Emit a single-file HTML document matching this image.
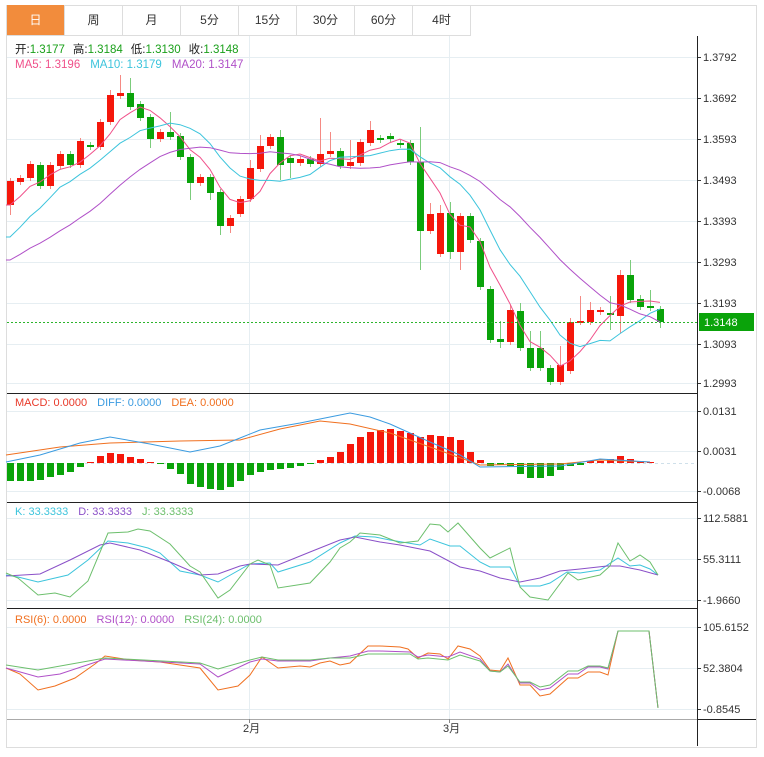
<!DOCTYPE html>
<html><head><meta charset="utf-8"><style>
body{margin:0;background:#fff;width:764px;height:757px;overflow:hidden;font-family:"Liberation Sans","Noto Sans CJK SC",sans-serif}
#box{position:absolute;left:6px;top:5px;width:749px;height:741px;border:1px solid #ddd}
.tab{position:absolute;top:5px;height:30px;width:57px;border-right:1px solid #ddd;border-bottom:1px solid #ddd;font-size:12px;line-height:30px;text-align:center;color:#333}
svg{position:absolute;left:0;top:0}
</style></head><body>
<div id="box"></div>
<div id="tabs"></div>
<svg id="s" width="764" height="757" font-family="Liberation Sans, Noto Sans CJK SC, sans-serif"></svg>
<script>
var T=["日","周","月","5分","15分","30分","60分","4时"],h="";
T.forEach(function(t,i){h+='<div class="tab" style="left:'+(7+i*58)+'px;'+(i==0?'background:#f28c3c;color:#fff;':'')+'">'+t+'</div>'});
document.getElementById('tabs').innerHTML=h;
var o="";
function L(x1,y1,x2,y2,c,w,d){o+='<line x1="'+x1+'" y1="'+y1+'" x2="'+x2+'" y2="'+y2+'" stroke="'+c+'" stroke-width="'+(w||1)+'"'+(d?' stroke-dasharray="'+d+'"':'')+'/>'}
function P(pts,c){o+='<polyline fill="none" stroke="'+c+'" stroke-width="1" points="'+pts.map(function(p){return p.join(',')}).join(' ')+'"/>'}
function TX(x,y,t,c,s){o+='<text x="'+x+'" y="'+y+'" fill="'+c+'" font-size="'+(s||11)+'">'+t+'</text>'}
var mg=[[57,"1.3792"],[98,"1.3692"],[139,"1.3593"],[180,"1.3493"],[221,"1.3393"],[262,"1.3293"],[303,"1.3193"],[344,"1.3093"],[383,"1.2993"]];
var g2=[[411,"0.0131"],[451,"0.0031"],[491,"-0.0068"]];
var g3=[[518,"112.5881"],[559,"55.3111"],[600,"-1.9660"]];
var g4=[[627,"105.6152"],[668,"52.3804"],[709,"-0.8545"]];
[mg,g2,g3,g4].forEach(function(g){g.forEach(function(a){L(7,a[0]+.5,697,a[0]+.5,"#e6eef2");L(697,a[0]+.5,701,a[0]+.5,"#333");TX(703,a[0]+4,a[1],"#333",11)})});
L(249.5,36,249.5,720,"#e6eef2");L(449.5,36,449.5,720,"#e6eef2");
L(7,463.5,697,463.5,"#cfe0ea",1,"3,3");
var C=[[1,181,205],[1,178,182],[1,164,178],[0,165,186],[1,165,186],[1,154,166],[0,154,165],[1,141,165],[0,145,147],[1,122,147],[1,95,122],[1,93,96],[0,93,107],[0,104,118],[0,117,139],[1,132,139],[0,132,137],[0,136,157],[0,157,183],[1,177,183],[0,177,193],[0,192,226],[1,218,226],[1,199,214],[1,168,199],[1,146,169],[1,137,146],[0,137,165],[0,158,163],[1,159,163],[0,159,164],[1,154,164],[1,151,154],[0,151,166],[1,162,166],[1,142,163],[1,130,143],[0,138,140],[0,136,139],[0,143,145],[0,143,162],[0,162,231],[1,214,231],[1,213,254],[0,213,252],[1,216,252],[0,216,240],[0,241,287],[0,289,340],[0,339,342],[1,310,342],[0,311,348],[0,348,368],[0,348,368],[0,368,382],[1,365,382],[1,322,371],[1,321,322],[1,310,322],[1,310,312],[0,313,315],[1,275,316],[0,275,300],[0,299,307],[0,306,308],[0,309,322]];
var W={1:[0,215],11:[90,0],12:[75,0],13:[78,0],15:[0,148],17:[112,0],19:[0,200],21:[0,200],22:[0,235],23:[0,233],25:[160,0],26:[135,0],28:[130,180],29:[0,178],32:[118,0],33:[132,0],35:[140,0],37:[121,0],42:[127,270],43:[203,0],44:[205,0],45:[202,259],46:[0,270],48:[238,0],49:[286,0],50:[321,348],51:[305,0],52:[303,0],53:[331,371],54:[331,0],56:[346,0],57:[318,0],58:[296,0],59:[302,0],61:[296,330],62:[270,333],63:[260,0],64:[295,0],65:[290,0],66:[0,328]};
var closes=[290,288,286,284,283,282,281,280,278,278,275,272,270,268,260,220,215,208,201];
C.forEach(function(c,i){var x=10+i*10,w=W[i+1]||[0,0],hi=w[0]||c[1]-3,lo=w[1]||c[2]+3,col=c[0]?"#f5170b":"#0aa30a";
L(x+.5,hi,x+.5,lo,c[0]?"#f58a84":"#7ccc7c");
o+='<rect x="'+(x-3)+'" y="'+c[1]+'" width="7" height="'+Math.max(2,c[2]-c[1])+'" fill="'+col+'"/>';
closes.push(c[0]?c[1]:c[2]);});
[[5,"#f0508a"],[10,"#3cc4dc"],[20,"#b050c8"]].forEach(function(m){var pts=[];for(var i=0;i<66;i++){var k=i+19,s=0;for(var j=0;j<m[0];j++)s+=closes[k-j];pts.push([10+i*10,(s/m[0]).toFixed(1)])}pts.unshift([6,pts[0][1]]);P(pts,m[1])});
L(7,322.5,697,322.5,"#2cb52c",1,"2,2");
o+='<rect x="699" y="313" width="55" height="18" fill="#0aa30a"/>';TX(704,326,"1.3148","#fff",11);
var mb=[481,481,481,480,477,475,472,467,462,456,453,454,457,459,462,463,469,474,484,487,489,490,487,481,475,472,470,469,468,466,464,460,457,452,444,437,432,430,429,431,433,437,435,436,437,440,452,460,466,465,466,474,478,478,476,470,466,465,461,461,459,456,459,461,462];
mb.forEach(function(v,i){var x=10+i*10,t=Math.min(v,463),b=Math.max(v,463);if(b-t<1)b=t+1;o+='<rect x="'+(x-3)+'" y="'+t+'" width="7" height="'+(b-t)+'" fill="'+(v<463?"#f5170b":"#0aa30a")+'"/>'});
P([[6,455],[60,447],[110,443],[180,441],[240,440],[280,429],[320,421],[350,424],[390,433],[430,447],[480,465],[560,464],[600,460],[650,462]],"#f07020");
P([[6,462],[40,455],[80,443],[110,437],[150,444],[190,452],[220,446],[240,438],[260,430],[300,423],[330,417],[350,413],[370,417],[390,424],[430,442],[460,455],[480,467],[560,466],[600,459],[650,462]],"#3b9be0");
P([[6,575],[18,577],[38,582],[68,575],[88,560],[108,541],[128,543],[148,548],[160,553],[180,571],[200,575],[218,582],[250,564],[270,563],[278,572],[310,562],[340,543],[355,536],[375,537],[390,540],[420,545],[430,539],[450,546],[460,546],[480,562],[490,567],[510,567],[520,586],[540,586],[550,583],[567,572],[580,573],[600,570],[618,558],[630,566],[640,565],[650,569],[658,575]],"#3cc4dc");
P([[6,576],[40,574],[70,560],[100,545],[110,543],[140,550],[170,562],[200,575],[218,574],[240,566],[250,564],[278,565],[310,552],[340,540],[355,537],[380,542],[400,545],[430,551],[460,567],[480,571],[500,578],[520,582],[540,578],[560,571],[580,569],[607,566],[620,566],[640,570],[658,575]],"#8a50c8");
P([[6,573],[18,578],[38,595],[55,593],[70,597],[88,581],[108,533],[128,532],[138,529],[150,531],[170,544],[190,566],[200,572],[218,598],[230,590],[250,564],[258,560],[270,565],[278,588],[310,583],[330,562],[340,548],[350,542],[360,533],[380,535],[400,543],[418,541],[430,524],[440,525],[448,532],[458,523],[480,548],[490,558],[510,548],[520,587],[530,597],[548,600],[568,573],[578,580],[600,575],[610,566],[618,543],[630,561],[640,555],[650,562],[658,575]],"#6cbf6c");
P([[6,668],[20,674],[38,690],[55,686],[75,678],[95,664],[105,656],[130,660],[160,662],[200,668],[218,690],[238,686],[250,675],[262,657],[278,668],[300,666],[310,667],[320,663],[330,661],[340,665],[350,663],[368,646],[380,646],[400,647],[408,649],[418,658],[428,653],[440,654],[448,659],[458,646],[470,649],[480,656],[490,670],[500,671],[508,658],[520,685],[530,685],[540,696],[550,694],[568,678],[578,678],[588,672],[600,672],[608,675],[618,631],[649,631],[658,708]],"#f07020");
P([[6,668],[38,677],[60,674],[105,659],[200,664],[218,677],[250,662],[262,659],[278,661],[310,661],[330,658],[350,656],[368,651],[380,651],[410,652],[418,657],[428,655],[448,657],[460,652],[480,659],[490,671],[500,672],[508,664],[520,683],[530,683],[540,690],[550,688],[568,674],[578,674],[588,667],[600,667],[608,669],[618,631],[649,631],[658,708]],"#b050c8");
P([[6,665],[38,670],[105,658],[200,663],[218,669],[250,660],[262,657],[278,660],[310,660],[330,658],[350,658],[368,654],[380,654],[410,654],[418,659],[428,658],[448,660],[460,655],[480,661],[490,671],[500,672],[508,666],[520,682],[530,682],[540,687],[550,685],[568,671],[578,671],[588,666],[600,666],[608,668],[618,631],[649,631],[658,708]],"#6cbf6c");
L(697.5,36,697.5,746,"#222");
[393.5,502.5,608.5].forEach(function(y){L(7,y,697,y,"#222")});
L(7,719.5,697,719.5,"#aaa");L(697,719.5,756,719.5,"#222");
L(249.5,719,249.5,723,"#888");L(449.5,719,449.5,723,"#888");
TX(243,732,"2月","#333",11);TX(443,732,"3月","#333",11);
o+='<text x="15" y="53" font-size="11.5"><tspan fill="#222">开:</tspan><tspan fill="#1aa01a">1.3177</tspan><tspan fill="#222" dx="8">高:</tspan><tspan fill="#1aa01a">1.3184</tspan><tspan fill="#222" dx="8">低:</tspan><tspan fill="#1aa01a">1.3130</tspan><tspan fill="#222" dx="8">收:</tspan><tspan fill="#1aa01a">1.3148</tspan></text>';
o+='<text x="15" y="68" font-size="11.5"><tspan fill="#f0508a">MA5: 1.3196</tspan><tspan fill="#3cc4dc" dx="10">MA10: 1.3179</tspan><tspan fill="#b050c8" dx="10">MA20: 1.3147</tspan></text>';
o+='<text x="15" y="406" font-size="11"><tspan fill="#e83828">MACD: 0.0000</tspan><tspan fill="#3b9be0" dx="10">DIFF: 0.0000</tspan><tspan fill="#f07020" dx="10">DEA: 0.0000</tspan></text>';
o+='<text x="15" y="515" font-size="11"><tspan fill="#3cc4dc">K: 33.3333</tspan><tspan fill="#8a50c8" dx="10">D: 33.3333</tspan><tspan fill="#6cbf6c" dx="10">J: 33.3333</tspan></text>';
o+='<text x="15" y="623" font-size="11"><tspan fill="#f07020">RSI(6): 0.0000</tspan><tspan fill="#b050c8" dx="10">RSI(12): 0.0000</tspan><tspan fill="#6cbf6c" dx="10">RSI(24): 0.0000</tspan></text>';
document.getElementById('s').innerHTML=o;
</script>
</body></html>
